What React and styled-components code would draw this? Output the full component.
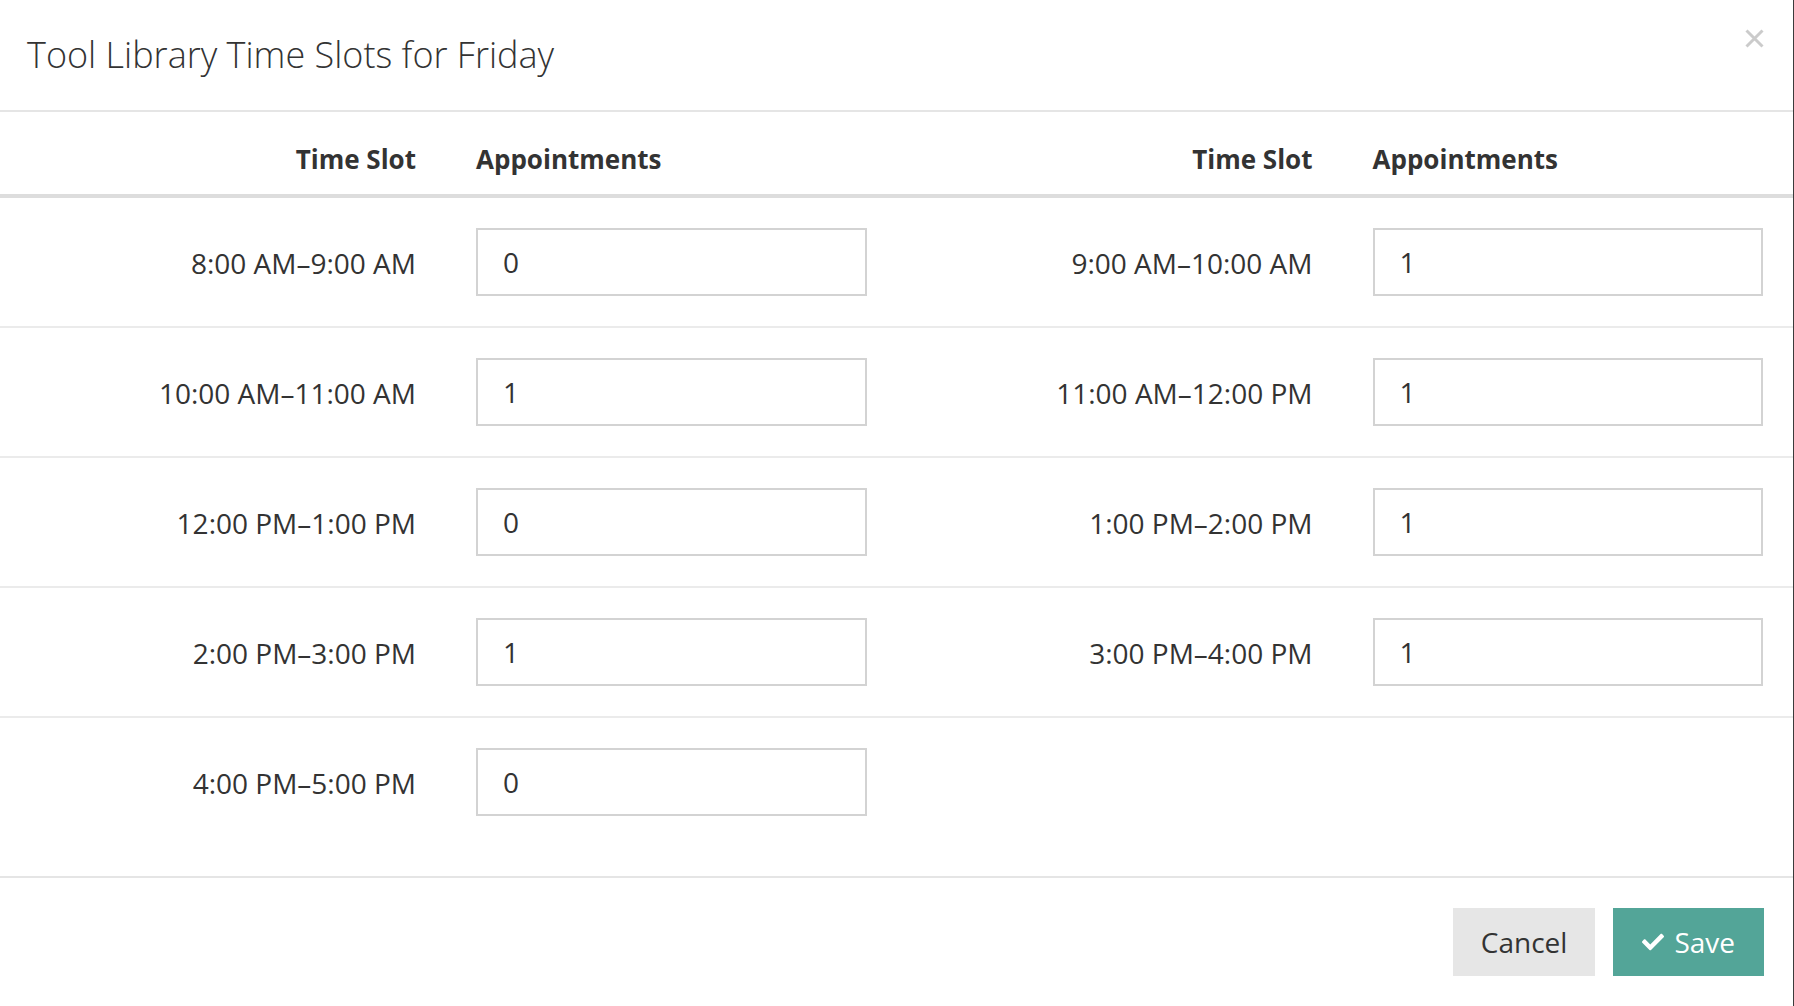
import React from "react";
import styled, { createGlobalStyle } from "styled-components";
import { FaCheck } from "react-icons/fa";

const GlobalStyle = createGlobalStyle`
  html, body {
    margin: 0;
    padding: 0;
    background: #3b3b3b;
  }
  body {
    font-family: "Open Sans", "DejaVu Sans", sans-serif;
    color: #333;
  }
`;

const slots = [
  [
    { time: "8:00 AM–9:00 AM", count: 0 },
    { time: "9:00 AM–10:00 AM", count: 1 },
  ],
  [
    { time: "10:00 AM–11:00 AM", count: 1 },
    { time: "11:00 AM–12:00 PM", count: 1 },
  ],
  [
    { time: "12:00 PM–1:00 PM", count: 0 },
    { time: "1:00 PM–2:00 PM", count: 1 },
  ],
  [
    { time: "2:00 PM–3:00 PM", count: 1 },
    { time: "3:00 PM–4:00 PM", count: 1 },
  ],
  [{ time: "4:00 PM–5:00 PM", count: 0 }, null],
];

export default function App() {
  return (
    <>
      <GlobalStyle />
      <Modal>
        <Header>
          <Title>Tool Library Time Slots for Friday</Title>
          <Close aria-label="Close">
            <svg width="19" height="19" viewBox="0 0 19 19">
              <path d="M1.5 1.5 L17.5 17.5 M17.5 1.5 L1.5 17.5" stroke="#cbcbcb" strokeWidth="3" />
            </svg>
          </Close>
        </Header>
        <Body>
          <HeadRow>
            {[0, 1].map((i) => (
              <Half key={i} right={i === 1}>
                <TimeHead>Time Slot</TimeHead>
                <CountHead>Appointments</CountHead>
              </Half>
            ))}
          </HeadRow>
          {slots.map((pair, r) => (
            <Row key={r} first={r === 0}>
              {pair.map((slot, i) => (
                <Half key={i} right={i === 1}>
                  {slot && (
                    <>
                      <TimeCell>{slot.time}</TimeCell>
                      <CountCell>
                        <Input defaultValue={slot.count} />
                      </CountCell>
                    </>
                  )}
                </Half>
              ))}
            </Row>
          ))}
        </Body>
        <Footer>
          <CancelButton>Cancel</CancelButton>
          <SaveButton>
            <FaCheck size={22} />
            Save
          </SaveButton>
        </Footer>
      </Modal>
    </>
  );
}

const Modal = styled.div`
  width: 1793px;
  height: 1006px;
  background: #fff;
  display: flex;
  flex-direction: column;
  overflow: hidden;
`;

const Header = styled.div`
  height: 110px;
  border-bottom: 2px solid #e5e5e5;
  display: flex;
  align-items: center;
  padding: 0 29px 0 27px;
  position: relative;
`;

const Title = styled.h4`
  margin: 0;
  font-size: 36px;
  font-weight: 300;
  color: #333;
  line-height: 1.2;
`;

const Close = styled.button`
  position: absolute;
  top: 29px;
  right: 29px;
  border: none;
  background: none;
  padding: 0;
  width: 19px;
  height: 19px;
  line-height: 0;
  cursor: pointer;
`;

const Body = styled.div`
  padding-bottom: 30px;
`;

const Half = styled.div`
  flex: 1;
  display: grid;
  grid-template-columns: 446px 1fr;
  align-items: center;
  padding-left: ${(p) => (p.right ? "2px" : "0")};
  margin-right: ${(p) => (p.right ? "0" : "-2px")};
`;

const HeadRow = styled.div`
  display: flex;
  height: 82px;
  border-bottom: 4px solid #dddddd;

  ${Half} {
    align-items: end;
    padding-bottom: 15px;
  }
`;

const TimeHead = styled.div`
  text-align: right;
  padding-right: 30px;
  font-size: 26px;
  font-weight: 700;
  line-height: 40px;
`;

const CountHead = styled.div`
  padding-left: 30px;
  font-size: 26px;
  font-weight: 700;
  line-height: 40px;
`;

const Row = styled.div`
  display: flex;
  border-top: ${(p) => (p.first ? "none" : "2px solid #ebebeb")};
  padding: 30px 0;
`;

const TimeCell = styled.div`
  text-align: right;
  padding-right: 30px;
  font-size: 28px;
  line-height: 40px;
  color: #333;
  transform: translateY(1px);
`;

const CountCell = styled.div`
  padding: 0 30px;
`;

const Input = styled.input`
  box-sizing: border-box;
  display: block;
  width: 100%;
  height: 68px;
  border: 2px solid #d3d3d3;
  border-radius: 0;
  padding: 0 25px;
  font-family: inherit;
  font-size: 28px;
  color: #333;
  outline: none;
`;

const Footer = styled.div`
  border-top: 2px solid #e5e5e5;
  display: flex;
  justify-content: flex-end;
  gap: 18px;
  padding: 30px 29px 30px 0;
`;

const Button = styled.button`
  box-sizing: border-box;
  height: 68px;
  border: none;
  border-radius: 0;
  font-family: inherit;
  font-size: 28px;
  display: flex;
  align-items: center;
  cursor: pointer;
`;

const CancelButton = styled(Button)`
  background: #e6e6e6;
  color: #333;
  padding: 0 28px;
`;

const SaveButton = styled(Button)`
  background: #53a598;
  color: #fff;
  padding: 0 29px 0 29px;
  gap: 10px;
`;
